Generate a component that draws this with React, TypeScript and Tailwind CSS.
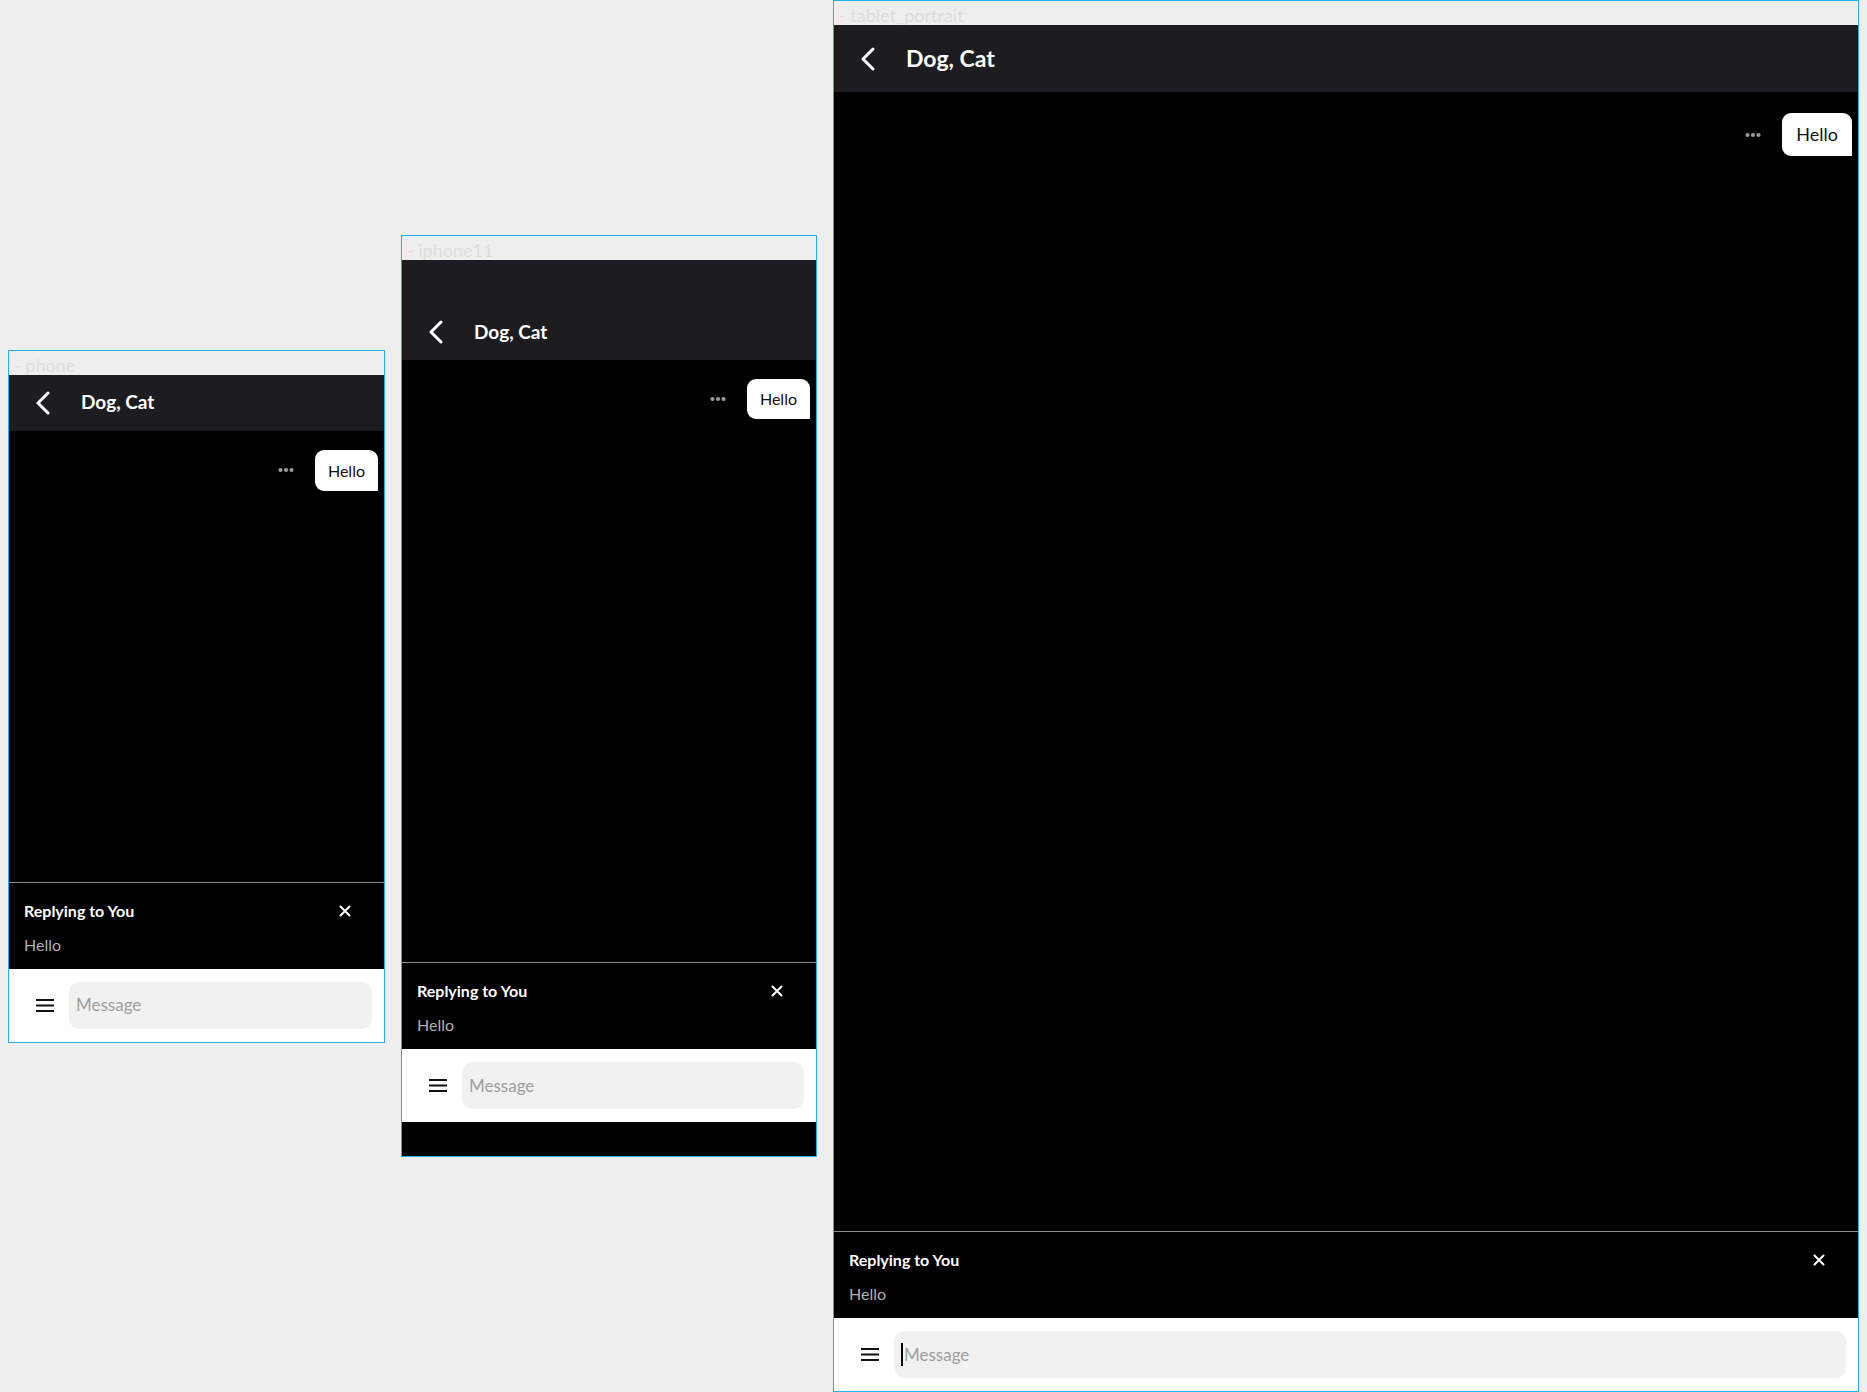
import type { ReactNode } from 'react';

interface DeviceProps {
  label: string;
  screenClass: string;
  headerClass: string;
  titleClass: string;
  bubbleClass: string;
  messagesClass: string;
  statusBar?: boolean;
  homeBar?: boolean;
  caret?: boolean;
}

function BackIcon() {
  return (
    <svg width="16" height="24" viewBox="0 0 16 24" fill="none">
      <path d="M13 2 L3 12 L13 22" stroke="white" strokeWidth="3" strokeLinecap="round" strokeLinejoin="round" />
    </svg>
  );
}

function Dots() {
  return (
    <svg width="16" height="6" viewBox="0 0 16 6">
      <circle cx="2.5" cy="3" r="2.1" fill="#9a9a9a" />
      <circle cx="8" cy="3" r="2.1" fill="#9a9a9a" />
      <circle cx="13.5" cy="3" r="2.1" fill="#9a9a9a" />
    </svg>
  );
}

function CloseIcon() {
  return (
    <svg width="12" height="12" viewBox="0 0 12 12" fill="none">
      <path d="M1.5 1.5 L10.5 10.5 M10.5 1.5 L1.5 10.5" stroke="white" strokeWidth="2" strokeLinecap="round" />
    </svg>
  );
}

function MenuIcon() {
  return (
    <svg width="18" height="13" viewBox="0 0 18 13">
      <rect x="0" y="0" width="18" height="2" fill="#111" />
      <rect x="0" y="5.5" width="18" height="2" fill="#111" />
      <rect x="0" y="11" width="18" height="2" fill="#111" />
    </svg>
  );
}

function Frame({ label, children }: { label: string; children: ReactNode }) {
  return (
    <div className="border border-[#1fb2ef] bg-[#eeeeee]">
      <div className="h-[24px] overflow-hidden pl-[5px] pt-[5px]">
        <span className="block text-[18px] leading-[18px] text-[#dfdcdc]">{label}</span>
      </div>
      {children}
    </div>
  );
}

function Device({
  label,
  screenClass,
  headerClass,
  titleClass,
  bubbleClass,
  messagesClass,
  statusBar,
  homeBar,
  caret,
}: DeviceProps) {
  return (
    <Frame label={label}>
      <div className={`flex flex-col bg-black ${screenClass}`}>
        <div className="bg-[#1d1d21]">
          {statusBar && <div className="h-[44px]"></div>}
          <div className={`flex items-center pl-[26px] ${headerClass}`}>
            <BackIcon />
            <h1 className={`ml-[30px] font-bold text-white ${titleClass}`}>Dog, Cat</h1>
          </div>
        </div>

        <div className={`flex-1 ${messagesClass}`}>
          <div className="flex items-center justify-end gap-[21px] pr-[6px]">
            <Dots />
            <div className={`rounded-[9px] rounded-br-none bg-white text-[#111] ${bubbleClass}`}>Hello</div>
          </div>
        </div>

        <div className="border-t border-[#8d8d8d] bg-black pl-[15px] pr-[33px] pt-[18px] pb-[14px]">
          <div className="flex items-center justify-between">
            <span className="text-[16px] leading-[20px] font-bold text-white">Replying to You</span>
            <CloseIcon />
          </div>
          <div className="mt-[14px] text-[16px] leading-[20px] text-[#b0b0b0]">Hello</div>
        </div>

        <div className="flex h-[73px] items-center bg-white pr-[12px]">
          <div className="flex w-[60px] pl-[27px]">
            <MenuIcon />
          </div>
          <div className="flex h-[47px] flex-1 items-center rounded-[10px] bg-[#f1f1f1] pl-[7px]">
            {caret && <span className="mr-[1px] h-[23px] w-[2px] bg-black"></span>}
            <span className="text-[17px] text-[#9e9e9e]">Message</span>
          </div>
        </div>

        {homeBar && <div className="h-[34px] bg-black"></div>}
      </div>
    </Frame>
  );
}

export default function App() {
  return (
    <div className="flex h-[1392px] w-[1867px] items-center gap-[16px] overflow-hidden bg-[#eeeeee] px-[8px] font-['Lato',sans-serif]">
      <Device
        label="- phone"
        screenClass="w-[375px] h-[667px]"
        headerClass="h-[56px]"
        titleClass="text-[19px]"
        bubbleClass="px-[13px] py-[10px] text-[16px] leading-[21px]"
        messagesClass="pt-[19px]"
      />
      <Device
        label="- iphone11"
        screenClass="w-[414px] h-[896px]"
        headerClass="h-[56px]"
        titleClass="text-[19px]"
        bubbleClass="px-[13px] py-[10px] text-[16px] leading-[20px]"
        messagesClass="pt-[19px]"
        statusBar
        homeBar
      />
      <Device
        label="- tablet_portrait"
        screenClass="w-[1024px] h-[1366px]"
        headerClass="h-[67px]"
        titleClass="text-[23px]"
        bubbleClass="px-[14px] py-[11px] text-[18px] leading-[21px]"
        messagesClass="pt-[21px]"
        caret
      />
    </div>
  );
}
